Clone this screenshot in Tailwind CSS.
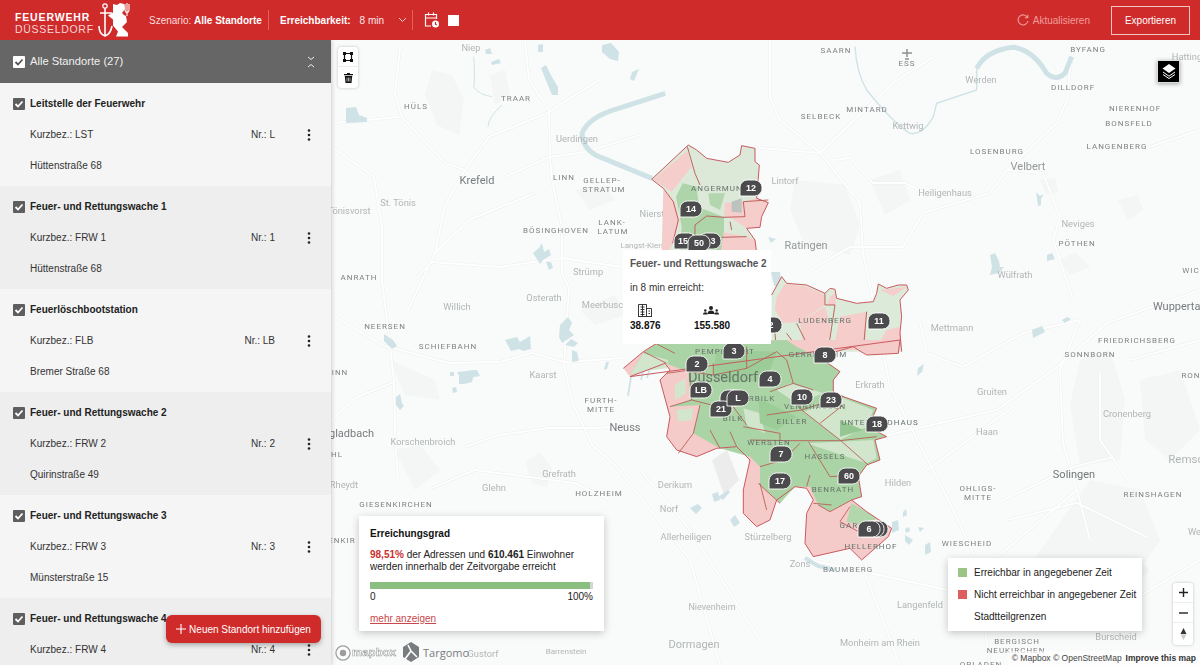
<!DOCTYPE html>
<html lang="de">
<head>
<meta charset="utf-8">
<title>Feuerwehr Düsseldorf</title>
<script src="https://cdn.jsdelivr.net/npm/@tailwindcss/browser@4"></script>
</head>
<body class="m-0 overflow-hidden">
<div class="w-[1200px] h-[665px] flex flex-col overflow-hidden [font-family:'Liberation_Sans',Arial,sans-serif] text-[10px] text-[#333]">
  <!-- header -->
  <header class="h-10 shrink-0 bg-[#d02b2b] flex items-center text-white relative z-20">
    <div class="w-[149px] h-10 shrink-0 flex items-center pl-[15px] relative">
      <div class="flex flex-col leading-none mt-[6px]">
        <span class="text-[10.5px] font-bold tracking-[0.85px] leading-[12px]">FEUERWEHR</span>
        <span class="text-[10.5px] tracking-[0.7px] leading-[12px] text-[#f6d5d5]">DÜSSELDORF</span>
      </div>
      <svg class="absolute left-[98px] top-0" width="36" height="40" viewBox="98 0 36 40" fill="#fff">
        <circle cx="105" cy="6" r="2.2" fill="none" stroke="#fff" stroke-width="1.2"/>
        <path d="M100 13h12M105 8v27M99 26c0 6 3 9 6 10c3-1 6-4 7-10" fill="none" stroke="#fff" stroke-width="1.6"/>
        <path d="M113 4l4 1 3-2 4 1 1 5-3 4 2 2 2 1 1 6-5 5 6 6v3.500h-12l2-5-5-6 0-6-5-4 5-3z"/>
        <path d="M127 3v13M125 4v6c0 2 2 3 2 3s2-1 2-3V4" fill="none" stroke="#fff" stroke-width="1.100"/>
      </svg>
    </div>
    <div class="flex items-center h-[20px] w-[120px] border-r border-[#e0605c] shrink-0 whitespace-nowrap text-[#f9dede]">Szenario:&nbsp;<b class="text-white">Alle Standorte</b></div>
    <div class="flex items-center pl-[11px] w-[144px] h-[20px] border-r border-[#e0605c] shrink-0 whitespace-nowrap">
      <b>Erreichbarkeit:</b><span class="ml-[9px] text-[#fbe7e7]">8 min</span>
      <svg class="ml-[14px]" width="9" height="6" viewBox="0 0 9 6" fill="none" stroke="#f7d0d0" stroke-width="1"><path d="M1 1l3.500 3.500L8 1"/></svg>
    </div>
    <svg class="ml-[11px]" width="16" height="18" viewBox="0 0 16 18" fill="none" stroke="#fff" stroke-width="1.200"><path d="M7 15H1.500V3.500h11V8M1.500 7h11M4.500 1.500v3M9.500 1.500v3"/><circle cx="11.500" cy="13" r="3.500" fill="#fff" stroke="none"/><path d="M11.500 11v2.200l1.300.8" stroke="#d02b2b"/></svg>
    <div class="ml-[8px] w-[11px] h-[11px] bg-white"></div>
    <div class="ml-auto flex items-center text-[#ee9d9b]">
      <svg width="12" height="12" viewBox="0 0 12 12" fill="none" stroke="#ee9d9b" stroke-width="1.100"><path d="M10.500 3.500A5 5 0 1 0 11 7M10.800 .8v3h-3"/></svg>
      <span class="ml-[4px]">Aktualisieren</span>
    </div>
    <div class="ml-[21px] mr-[10px] w-[79px] h-[29px] border border-[#f3c4c2] flex items-center justify-center text-[#fff]">Exportieren</div>
  </header>

  <div class="flex-1 flex min-h-0 relative">
    <!-- sidebar -->
    <aside class="w-[331px] shrink-0 flex flex-col relative z-10 shadow-[1px_0_4px_rgba(0,0,0,0.18)] overflow-hidden bg-[#f5f5f5]">
      <div class="h-[43px] shrink-0 bg-[#666666] flex items-center pl-[13px] text-[11.200px] text-[#f0f0f0]">
        <svg width="12" height="12" viewBox="0 0 12 12"><rect width="12" height="12" rx="1" fill="#fff"/><path d="M2.500 6l2.500 2.500L9.500 3.500" fill="none" stroke="#555" stroke-width="1.800"/></svg>
        <span class="ml-[5px]">Alle Standorte (27)</span>
        <svg class="ml-auto mr-[16px]" width="8" height="14" viewBox="0 0 8 14" fill="none" stroke="#eee" stroke-width="1"><path d="M1 2l3 2.500L7 2M1 12l3-2.500L7 12"/></svg>
      </div>

      <div class="h-[103px] shrink-0 bg-[#f5f5f5] pt-[5px] flex flex-col">
        <div class="h-[31px] flex items-center pl-[13px] font-bold text-[#222]"><svg width="12" height="12" viewBox="0 0 12 12"><rect width="12" height="12" rx="1" fill="#5e5e5e"/><path d="M2.500 6l2.500 2.500L9.500 3.500" fill="none" stroke="#fff" stroke-width="1.800"/></svg><span class="ml-[5px]">Leitstelle der Feuerwehr</span></div>
        <div class="h-[31px] flex items-center pl-[30px]"><span>Kurzbez.: LST</span><span class="ml-auto">Nr.: L</span><svg class="ml-[32px] mr-[20px]" width="4" height="12" viewBox="0 0 4 12" fill="#222"><circle cx="2" cy="1.500" r="1.300"/><circle cx="2" cy="6" r="1.300"/><circle cx="2" cy="10.500" r="1.300"/></svg></div>
        <div class="h-[31px] flex items-center pl-[30px]">Hüttenstraße 68</div>
      </div>
      <div class="h-[103px] shrink-0 bg-[#eeeeee] pt-[5px] flex flex-col">
        <div class="h-[31px] flex items-center pl-[13px] font-bold text-[#222]"><svg width="12" height="12" viewBox="0 0 12 12"><rect width="12" height="12" rx="1" fill="#5e5e5e"/><path d="M2.500 6l2.500 2.500L9.500 3.500" fill="none" stroke="#fff" stroke-width="1.800"/></svg><span class="ml-[5px]">Feuer- und Rettungswache 1</span></div>
        <div class="h-[31px] flex items-center pl-[30px]"><span>Kurzbez.: FRW 1</span><span class="ml-auto">Nr.: 1</span><svg class="ml-[32px] mr-[20px]" width="4" height="12" viewBox="0 0 4 12" fill="#222"><circle cx="2" cy="1.500" r="1.300"/><circle cx="2" cy="6" r="1.300"/><circle cx="2" cy="10.500" r="1.300"/></svg></div>
        <div class="h-[31px] flex items-center pl-[30px]">Hüttenstraße 68</div>
      </div>
      <div class="h-[103px] shrink-0 bg-[#f5f5f5] pt-[5px] flex flex-col">
        <div class="h-[31px] flex items-center pl-[13px] font-bold text-[#222]"><svg width="12" height="12" viewBox="0 0 12 12"><rect width="12" height="12" rx="1" fill="#5e5e5e"/><path d="M2.500 6l2.500 2.500L9.500 3.500" fill="none" stroke="#fff" stroke-width="1.800"/></svg><span class="ml-[5px]">Feuerlöschbootstation</span></div>
        <div class="h-[31px] flex items-center pl-[30px]"><span>Kurzbez.: FLB</span><span class="ml-auto">Nr.: LB</span><svg class="ml-[32px] mr-[20px]" width="4" height="12" viewBox="0 0 4 12" fill="#222"><circle cx="2" cy="1.500" r="1.300"/><circle cx="2" cy="6" r="1.300"/><circle cx="2" cy="10.500" r="1.300"/></svg></div>
        <div class="h-[31px] flex items-center pl-[30px]">Bremer Straße 68</div>
      </div>
      <div class="h-[103px] shrink-0 bg-[#eeeeee] pt-[5px] flex flex-col">
        <div class="h-[31px] flex items-center pl-[13px] font-bold text-[#222]"><svg width="12" height="12" viewBox="0 0 12 12"><rect width="12" height="12" rx="1" fill="#5e5e5e"/><path d="M2.500 6l2.500 2.500L9.500 3.500" fill="none" stroke="#fff" stroke-width="1.800"/></svg><span class="ml-[5px]">Feuer- und Rettungswache 2</span></div>
        <div class="h-[31px] flex items-center pl-[30px]"><span>Kurzbez.: FRW 2</span><span class="ml-auto">Nr.: 2</span><svg class="ml-[32px] mr-[20px]" width="4" height="12" viewBox="0 0 4 12" fill="#222"><circle cx="2" cy="1.500" r="1.300"/><circle cx="2" cy="6" r="1.300"/><circle cx="2" cy="10.500" r="1.300"/></svg></div>
        <div class="h-[31px] flex items-center pl-[30px]">Quirinstraße 49</div>
      </div>
      <div class="h-[103px] shrink-0 bg-[#f5f5f5] pt-[5px] flex flex-col">
        <div class="h-[31px] flex items-center pl-[13px] font-bold text-[#222]"><svg width="12" height="12" viewBox="0 0 12 12"><rect width="12" height="12" rx="1" fill="#5e5e5e"/><path d="M2.500 6l2.500 2.500L9.500 3.500" fill="none" stroke="#fff" stroke-width="1.800"/></svg><span class="ml-[5px]">Feuer- und Rettungswache 3</span></div>
        <div class="h-[31px] flex items-center pl-[30px]"><span>Kurzbez.: FRW 3</span><span class="ml-auto">Nr.: 3</span><svg class="ml-[32px] mr-[20px]" width="4" height="12" viewBox="0 0 4 12" fill="#222"><circle cx="2" cy="1.500" r="1.300"/><circle cx="2" cy="6" r="1.300"/><circle cx="2" cy="10.500" r="1.300"/></svg></div>
        <div class="h-[31px] flex items-center pl-[30px]">Münsterstraße 15</div>
      </div>
      <div class="h-[103px] shrink-0 bg-[#eeeeee] pt-[5px] flex flex-col">
        <div class="h-[31px] flex items-center pl-[13px] font-bold text-[#222]"><svg width="12" height="12" viewBox="0 0 12 12"><rect width="12" height="12" rx="1" fill="#5e5e5e"/><path d="M2.500 6l2.500 2.500L9.500 3.500" fill="none" stroke="#fff" stroke-width="1.800"/></svg><span class="ml-[5px]">Feuer- und Rettungswache 4</span></div>
        <div class="h-[31px] flex items-center pl-[30px]"><span>Kurzbez.: FRW 4</span><span class="ml-auto">Nr.: 4</span><svg class="ml-[32px] mr-[20px]" width="4" height="12" viewBox="0 0 4 12" fill="#222"><circle cx="2" cy="1.500" r="1.300"/><circle cx="2" cy="6" r="1.300"/><circle cx="2" cy="10.500" r="1.300"/></svg></div>
      </div>

      <button class="absolute left-[166px] top-[575px] w-[155px] h-[28px] rounded-[6px] bg-[#d02b2b] text-white text-[10px] flex items-center justify-center whitespace-nowrap shadow-[0_2px_5px_rgba(0,0,0,0.3)]">
        <svg width="10" height="10" viewBox="0 0 10 10" stroke="#fff" stroke-width="1.100"><path d="M5 0v10M0 5h10"/></svg>
        <span class="ml-[3px]">Neuen Standort hinzufügen</span>
      </button>
    </aside>

    <!-- map -->
    <main class="flex-1 relative bg-[#f9fafa] overflow-hidden">
      <svg class="absolute inset-0 blur-[0.3px]" width="869" height="625" viewBox="331 40 869 625">
        <defs>
          <g id="roads" fill="none">
            <path d="M525 40L529 80L549 110L550 157L552 180L562 227L562 273L569 288L564 365L572 402L592 445L615 465L690 560L720 665"/>
            <path d="M400 48L395 95L402 117L445 163L465 170L489 137L549 112L572 97L599 80"/>
            <path d="M505 177L549 157L585 152L640 135"/>
            <path d="M435 253L469 220L535 193"/>
            <path d="M415 280L432 262L499 267L562 258L622 267"/>
            <path d="M335 123L399 117"/>
            <path d="M332 147L374 177L382 227L382 280L390 345L394 382L395 432L398 480"/>
            <path d="M332 315L382 345L449 363L499 362L532 353L565 362L622 358"/>
            <path d="M465 447L499 435L549 428L595 428L640 425"/>
            <path d="M432 488L475 470L575 483L610 500"/>
            <path d="M332 420L355 398L394 382"/>
            <path d="M465 170L445 205L435 253L408 310"/>
            <path d="M770 40L770 97L780 120L820 153L860 203L863 253L873 300L890 387L950 503L975 557L990 665"/>
            <path d="M760 148L820 153L893 83L933 57"/>
            <path d="M835 160L850 158L873 183L905 183L925 193"/>
            <path d="M903 247L923 213L990 193L1007 170L1057 123L1067 100L1070 70L1075 40"/>
            <path d="M1007 170L1043 173L1060 217L1053 240L1073 300"/>
            <path d="M810 270L850 247L903 247"/>
            <path d="M880 437L997 410L1057 367L1107 323L1200 290"/>
            <path d="M923 473L1013 407"/>
            <path d="M997 503L1073 467L1113 457"/>
            <path d="M1100 373L1100 440L1130 483"/>
            <path d="M920 323L927 353L963 367L1023 333L1080 320"/>
            <path d="M1080 320L1060 370L1063 443L1077 490L1090 540"/>
            <path d="M997 557L1077 490"/>
            <path d="M1007 520L1077 503L1147 537"/>
            <path d="M640 470L690 530L760 640"/>
            <path d="M850 470L860 560L900 665"/>
            <path d="M810 560L948 590"/>
            <path d="M1130 360L1200 340"/>
            <path d="M1140 150L1200 130"/>
            <path d="M1100 620L1200 560"/>
          </g>
        </defs>
        <!-- urban tints -->
        <g fill="#f4f5f5">
          <path d="M432 70l20 5 12 25-5 35-22-10-12-30z"/>
          <path d="M490 75l15-5 5 25-15 10z"/>
          <path d="M575 190l30-5 10 15-25 10z"/>
          <path d="M795 180l50 5 15 40-10 30-45-10-15-35z"/>
          <path d="M870 180l30-10 10 30-25 15z"/>
          <path d="M1060 260l15-8 15 15-20 8z"/>
          <path d="M1080 360l30-10 15 50-5 60-40 5-10-60z"/>
          <path d="M1090 480l50 10 20 50-40 60-60 5-30-40z"/>
          <path d="M1140 380l40-10 20 60-30 30-25-20z"/>
          <path d="M1040 560l60-30 50 40-30 30-70 5z"/>
          <path d="M390 360l45 20 5 20-35-5z"/>
          <path d="M395 450l25-5 20 25-25 20z"/>
          <path d="M525 462l15-10 12 15-5 20-15-3z"/>
          <path d="M580 310l35-15 10 20-30 10z"/>
          <path d="M1118 200l20-5 5 15-15 10z"/>
          <path d="M1040 180l15-2 3 14-12 3z"/>
          <path d="M712 460l15-10 12 30-15 15z" fill="#ececec"/>
        </g>
        <use href="#roads" stroke="#eef0f0" stroke-width="3"/>
        <use href="#roads" stroke="#ffffff" stroke-width="1.800"/>
        <!-- water -->
        <g transform="translate(332 40) scale(.3333)" fill="none" stroke="#cfe3e7">
          <path d="M1000 160L860 205Q770 230 750 280Q750 320 790 345L960 415" stroke-width="15"/>
          <path d="M425 50Q430 120 425 140Q440 165 480 170" stroke-width="3"/>
          <path d="M510 195Q470 230 468 260" stroke-width="3"/>
        </g>
        <g transform="translate(760 40) scale(.3333)" fill="none" stroke="#cfe3e7">
          <path d="M650 85Q680 30 760 22Q820 30 860 100Q890 125 915 100L935 50" stroke-width="15"/>
          <path d="M650 85V150L530 190L520 230Q490 285 450 280Q400 250 320 150Q290 100 285 20" stroke-width="4"/>
        </g>
        <path d="M805 558L818 566L835 570" fill="none" stroke="#cfe3e7" stroke-width="4"/>
        <g fill="#cfe3e7">
          <path d="M346 108l10-1 3 8 8 3 0 4-21 1z"/>
          <path d="M541 68l5-3 6 12 6 10 0 8-6 0-5-12z"/>
          <path d="M602 45l9-2 8 9-1 9-8-2-8-7z"/>
          <path d="M632 72l7-3-5 12-4-2z"/>
          <path d="M485 50l5-2 2 6-6 0zM491 62l8-3 2 4-9 2zM538 45l5-1 0 8-5 0z"/>
          <path d="M533 253l6-5 3-5 2 9 5-3 2 6-8 5-3 4zM546 262l5 0 2 6-4 2z"/>
          <path d="M384 334l9 6 4 6-5 3-8-8z"/>
          <path d="M505 340l12-3 3 5 10-6 1 13-8 2-4-2-8 2zM560 325l8-8 4 6-3 7 5 5-6 4-6 4-3-6z"/>
          <path d="M457 372l20-2 3 6-19 3zM450 372l4 0 0 4-4 0z"/>
          <path d="M459 376l8-5 8-1-3 12-8 2-5 0z"/>
          <path d="M396 397l4-3 2 9 2 3-4 4-4-5zM452 388l4-1 1 5-4 1z"/>
          <path d="M565 345l6-6 7 4-4 4zM572 350l5 2 2 9-7 1z"/>
          <path d="M606 362l3 0-2 7-3 1z"/>
          <path d="M740 208l3 3-1 4-3-2zM768 237l8 2-5 4z"/>
          <path d="M771 272l9 0 2 14-8 0z"/>
          <path d="M990 255l5-2 4 8 1 6 4 0-5 6-9 2 2-8z"/>
          <path d="M1036 192l4 4 4-2-3 5 0 6-3 1-1-8zM1047 255l5-2 3 6-8 2z"/>
          <path d="M1032 330l10-4 3 6-12 6zM1062 320l5-3 4 2-6 4z"/>
          <path d="M918 368l6-4-2 8-5 4z"/>
          <path d="M892 522l6-2 1 10-7 3zM903 512l3-3 1 6-4 2zM905 529l4-2 1 4-4 2zM918 527l6 1-4 4zM905 535l8 5-4 5-4-4zM925 545l5-3 1 10-6 3z"/>
          <path d="M690 508l8-4 4 4-6 6zM712 494l6-2 2 8-6 2zM718 497l10-7 2 2-7 8z"/>
          <path d="M730 520l5-5 5 8-6 4z"/>
          <path d="M640 357l-8 14-4 25M647 355l-6 25M653 358l-6 20" fill="none" stroke="#cfe3e7" stroke-width="1.800"/>
        </g>
        <!-- labels -->
        <g font-family="Roboto, 'Liberation Sans', sans-serif" font-size="9.300" fill="#b2b6b6" text-anchor="middle">
          <text x="471" y="51">Niep</text><text x="577" y="142">Uerdingen</text><text x="398" y="206">St. Tönis</text><text x="349" y="214">Tönisvorst</text><text x="652" y="217">Nierst</text><text x="644" y="248" font-size="8">Langst-Kierst</text><text x="588" y="275">Strümp</text><text x="544" y="301">Osterath</text><text x="457" y="310">Willich</text><text x="605" y="308">Meerbusch</text><text x="543" y="378">Kaarst</text><text x="423" y="445">Korschenbroich</text><text x="344" y="488">Rheydt</text><text x="559" y="477">Grefrath</text><text x="494" y="491">Glehn</text><text x="675" y="488">Derikum</text><text x="669" y="512">Norf</text><text x="686" y="540">Allerheiligen</text><text x="768" y="540">Stürzelberg</text><text x="800" y="567">Zons</text><text x="870" y="388">Erkrath</text><text x="898" y="486">Hilden</text><text x="981" y="83">Werden</text><text x="1187" y="60">Hatting</text><text x="908" y="129">Kettwig</text><text x="785" y="184">Lintorf</text><text x="945" y="196">Heiligenhaus</text><text x="1078" y="227">Neviges</text><text x="1015" y="278">Wülfrath</text><text x="952" y="331">Mettmann</text><text x="992" y="395">Gruiten</text><text x="1127" y="417">Cronenberg</text><text x="987" y="435">Haan</text><text x="1116" y="640">Burscheid</text><text x="566" y="654" font-size="8">Barrenstein</text><text x="483" y="657">Gustorf</text><text x="712" y="610" font-size="9">Nievenheim</text><text x="694" y="648" font-size="11">Dormagen</text><text x="880" y="646">Monheim am Rhein</text><text x="1196" y="535">Wer</text>
          <text x="920" y="608">Langenfeld</text>
          <text x="1189" y="463" font-size="11.500">Remsch</text>
        </g>
        <g font-family="Roboto, 'Liberation Sans', sans-serif" font-size="8" letter-spacing="1" fill="#808283" text-anchor="middle">
          <text x="416" y="109">HÜLS</text><text x="516" y="101">TRAAR</text><text x="564" y="180">LINN</text><text x="602" y="183">GELLEP-</text><text x="604" y="192">STRATUM</text><text x="556" y="233">BÖSINGHOVEN</text><text x="612" y="225">LANK-</text><text x="613" y="234">LATUM</text><text x="359" y="280">ANRATH</text><text x="385" y="329">NEERSEN</text><text x="448" y="349">SCHIEFBAHN</text><text x="340" y="375">INN</text><text x="601" y="403">FURTH-</text><text x="601" y="412">MITTE</text><text x="337" y="457">HL</text><text x="599" y="496">HOLZHEIM</text><text x="396" y="507">GIESENKIRCHEN</text><text x="836" y="53">SAARN</text><text x="907" y="66">ESS</text><text x="1088" y="52">BYFANG</text><text x="1073" y="90">DILLDORF</text><text x="821" y="119">SELBECK</text><text x="867" y="112">MINTARD</text><text x="1135" y="111">NIERENHOF</text><text x="1129" y="126">BONSFELD</text><text x="997" y="154">LOSENBURG</text><text x="1117" y="149">LANGENBERG</text><text x="1077" y="246">PÖTHEN</text><text x="1191" y="273">WIC</text><text x="1137" y="343">FRIEDRICHSBERG</text><text x="1090" y="357">SONNBORN</text><text x="1191" y="378">RON</text><text x="978" y="491">OHLIGS-</text><text x="978" y="500">MITTE</text><text x="1153" y="497">REINSHAGEN</text><text x="967" y="546">WIESCHEID</text><text x="1017" y="644">BERGISCH</text><text x="1016" y="653">NEUKIRCHEN</text><text x="981" y="667">OPLADEN</text><text x="848" y="572">BAUMBERG</text><text x="342" y="543">ENKIR</text>
        </g>
        <g font-family="Roboto, 'Liberation Sans', sans-serif" fill="#95999a" text-anchor="middle" font-size="11">
          <text x="477" y="184" fill="#787c7e">Krefeld</text><text x="806" y="249">Ratingen</text><text x="1028" y="170">Velbert</text><text x="625" y="431" fill="#747879">Neuss</text><text x="374" y="437" text-anchor="end" fill="#787c7e">Mönchengladbach</text><text x="1074" y="478" fill="#747879">Solingen</text><text x="1178" y="310" fill="#787c7e">Wuppertal</text>
        </g>
        <path d="M907 49v8M902 53h10M905 59h4" fill="none" stroke="#8d9192" stroke-width="1.500"/>

        <!-- north catchment -->
        <g transform="translate(600 130) scale(.3333)">
          <path d="M155 148L265 45L290 60L320 85L385 97L420 75L425 47L465 55L465 95L478 105L470 205L505 218L485 260L480 292L440 295L465 330L470 370L210 370L215 320L235 270L220 215L190 175Z" fill="#dce9d9"/>
          <path d="M160 148L262 62L275 110L215 185Z M190 178L222 215L238 270L218 340L205 370L185 370Z M375 218L430 215L470 205L505 218L485 260L480 292L440 295L395 265L372 262Z M362 305L440 320L465 330L470 370L365 370Z" fill="#f5cdcb"/>
          <path d="M248 160L290 170L297 232L372 262L372 300L362 370L238 370L245 290L228 200Z" fill="#aed5a9"/>
          <path d="M325 190L375 190L360 240L330 225Z" fill="#b3d6ae"/>
          <path d="M395 215L425 205L425 248L395 245Z" fill="#bcc2bd"/>
          <path d="M155 148L265 45L290 60L320 85L385 97L420 75L425 47L465 55L465 95L478 105L470 205L505 218L485 260L480 292L440 295L465 330L470 370M218 340L235 270L220 215L190 175L155 148" fill="none" stroke="#c9595e" stroke-width="3"/>
          <path d="M262 50L285 130L300 165M372 262L435 260L430 215L505 210M285 285L320 258L372 262M285 285L285 325M365 322L440 320M390 275L395 300" fill="none" stroke="#b85b55" stroke-width="2.800"/>
        </g>
        <!-- east catchment -->
        <g transform="translate(600 130) scale(.3333)">
          <path d="M515 495L545 440L560 460L620 465L675 490L690 475L705 478L710 505L770 520L820 515L830 490L835 462L860 475L895 465L920 465L925 480L900 510L905 560L900 610L905 665L515 665Z" fill="#dcebd9"/>
          <path d="M530 500L555 462L620 470L675 495L675 525L600 575L550 580L525 540Z M690 500L705 490L708 525L680 525Z M720 560L800 545L795 660L700 660Z M860 600L900 590L905 650L830 650Z M840 480L860 478L920 470L880 498Z M600 575L675 530L690 580L690 625L610 650Z" fill="#f5cdcb"/>
          <path d="M515 495L545 440L560 460L620 465L675 490L690 475L705 478L710 505L770 520L820 515L830 490L835 462L860 475L895 465L920 465L925 480L900 510L905 560L900 610L905 665" fill="none" stroke="#c9595e" stroke-width="3"/>
          <path d="M675 490L675 525L705 525L690 625L680 665M800 545L790 660M525 610L530 665M560 610L600 665M620 640L590 580" fill="none" stroke="#b85b55" stroke-width="2.800"/>
        </g>
        <!-- south catchment -->
        <g transform="translate(610 340) scale(.3333)">
          <path d="M40 85L100 35L140 10L480 0L870 0L865 40L770 45L745 30L730 20L660 40L640 60L690 95L670 120L670 155L700 170L800 205L775 260L830 290L795 300L810 360L770 375L745 410L755 470L725 480L770 515L845 565L835 590L755 660L720 625L610 650L585 610L590 520L610 480L590 445L555 440L500 480L480 540L440 560L400 520L400 450L420 360L380 320L320 325L260 350L200 330L170 290L180 230L150 120L180 90L165 70L60 110Z" fill="#f5cbca"/>
          <path d="M60 105L100 38L140 10L530 0L560 20L640 60L690 95L670 120L670 155L700 170L800 205L775 260L830 290L795 300L810 360L770 375L745 410L755 470L725 480L660 515L625 495L600 440L555 440L510 490L450 435L450 380L420 350L330 325L250 280L270 195L180 200L240 180L235 95L165 70Z" fill="#aad4a5"/>
          <path d="M60 105L100 40L175 60L170 85L90 95Z M195 135L225 115L228 160L195 180Z M200 210L250 205L245 240L205 245Z M580 215L700 175L790 210L770 260L690 300Z M590 310L690 305L790 300L800 355L770 370Z M500 150L540 130L610 150L640 160L560 190Z M400 205L450 220L465 280L410 255Z" fill="#d2e6cd"/>
          <path d="M690 240L760 270L690 290Z" fill="#96c792"/>
          <path d="M320 30L500 35L470 120L360 130L310 105Z M445 175L560 230L500 270L450 250Z" fill="#9ccc97"/>
          <path d="M620 500L660 515L690 545L730 500L770 515L845 565L790 620L700 560Z" fill="#f5cbca"/>
          <path d="M725 490L770 515L800 535L770 560L710 545Z" fill="#b2d7ad"/>
          <path d="M40 85L100 35L140 10M870 0L865 40L770 45L745 30L730 20L660 40L640 60L690 95L670 120L670 155L700 170L800 205L775 260L830 290L795 300L810 360L770 375L745 410L755 470L725 480L770 515L845 565L835 590L755 660L720 625L610 650L585 610L590 520L610 480L590 445L555 440L500 480L480 540L440 560L400 520L400 450L420 360L380 320L320 325L260 350L200 330L170 290L180 230L150 120L180 90L165 70L60 110Z" fill="none" stroke="#c9595e" stroke-width="3"/>
          <path d="M170 100L240 90L245 180L180 200M245 180L305 195M270 195L250 280L205 340M310 70L310 105L240 95M310 105L410 85L500 35M410 20L410 85M500 35L530 60L550 130L610 150M550 130L480 155M550 160L575 210L690 300L775 375M470 225L575 210M575 210L700 170M630 250L700 195M400 260L510 280L510 300M420 300L540 302L690 302L800 290M595 305L660 410M570 310L520 360L450 380M600 405L590 440M660 410L750 405M450 430L470 510M445 430L510 490M725 480L660 515L625 495M720 500L690 545L755 580M340 160L410 255M360 275L380 320M300 270L330 325M100 35L170 70M140 12L195 40M610 490L665 495" fill="none" stroke="#b85b55" stroke-width="2.600"/>
        </g>
        <!-- district labels -->
        <g font-family="Roboto, 'Liberation Sans', sans-serif" font-size="8" letter-spacing="1" fill="#66726a" text-anchor="middle">
          <text x="720" y="191">ANGERMUND</text><text x="825" y="323">LUDENBERG</text><text x="725" y="354">PEMPELFORT</text><text x="818" y="357">GERRESHEIM</text><text x="753" y="401">OBERBILK</text><text x="733" y="421">BILK</text><text x="792" y="424">EILLER</text><text x="815" y="409">VENNHAUSEN</text><text x="880" y="425">UNTERFELDHAUS</text><text x="769" y="445">WERSTEN</text><text x="825" y="459">HASSELS</text><text x="833" y="492">BENRATH</text><text x="858" y="528">GARATH</text><text x="871" y="549">HELLERHOF</text>
        </g>
        <text x="723" y="382" font-family="Roboto, 'Liberation Sans', sans-serif" font-size="14.500" fill="#68746c" text-anchor="middle">Düsseldorf</text>
        <!-- markers -->
        <defs>
          <path id="pin" d="M-11 8V-1A7.500 7.500 0 0 1 -3.500 -8H3.500A7.500 7.500 0 0 1 11 -.5A7.500 7.500 0 0 1 3.500 8Z" fill="#4b4b4d" stroke="#fff" stroke-width=".9"/>
        </defs>
        <g font-family="'Liberation Sans', sans-serif" font-size="9" font-weight="700" fill="#fff" text-anchor="middle">
          <g transform="translate(751 188)"><use href="#pin"/><text y="3.300">12</text></g>
          <g transform="translate(691 209)"><use href="#pin"/><text y="3.300">14</text></g>
          <g transform="translate(710 241)"><use href="#pin"/><text y="3.300" x="3">3</text></g>
          <g transform="translate(685 241)"><use href="#pin"/><text y="3.300" x="-2">15</text></g>
          <g transform="translate(699 243)"><use href="#pin"/><text y="3.300">50</text></g>
          <g transform="translate(771 325)"><use href="#pin"/><text y="3.300">2</text></g>
          <g transform="translate(879 321)"><use href="#pin"/><text y="3.300">11</text></g>
          <g transform="translate(734 351)"><use href="#pin"/><text y="3.300">3</text></g>
          <g transform="translate(697 364)"><use href="#pin"/><text y="3.300">2</text></g>
          <g transform="translate(825 355)"><use href="#pin"/><text y="3.300">8</text></g>
          <g transform="translate(770 379)"><use href="#pin"/><text y="3.300">4</text></g>
          <g transform="translate(701 390)"><use href="#pin"/><text y="3.300">LB</text></g>
          <g transform="translate(731 398)"><use href="#pin"/></g>
          <g transform="translate(721 409)"><use href="#pin"/><text y="3.300">21</text></g>
          <g transform="translate(738 398)"><use href="#pin"/><text y="3.300">L</text></g>
          <g transform="translate(802 397)"><use href="#pin"/><text y="3.300">10</text></g>
          <g transform="translate(831 400)"><use href="#pin"/><text y="3.300">23</text></g>
          <g transform="translate(877 424)"><use href="#pin"/><text y="3.300">18</text></g>
          <g transform="translate(781 454)"><use href="#pin"/><text y="3.300">7</text></g>
          <g transform="translate(849 476)"><use href="#pin"/><text y="3.300">60</text></g>
          <g transform="translate(780 481)"><use href="#pin"/><text y="3.300">17</text></g>
          <g transform="translate(877 529)"><use href="#pin"/></g>
          <g transform="translate(873 529)"><use href="#pin"/></g>
          <g transform="translate(869 529)"><use href="#pin"/><text y="3.300">6</text></g>
        </g>
      </svg>

      <!-- draw control -->
      <div class="absolute left-[7px] top-[7px] w-5 bg-white rounded-[3px] shadow-[0_0_3px_rgba(0,0,0,0.25)] flex flex-col">
        <div class="h-[20px] flex items-center justify-center border-b border-[#eee]">
          <svg width="10" height="10" viewBox="0 0 10 10" fill="none" stroke="#111" stroke-width="1.200"><path d="M2 1.500h6M2 8.500h6M1.500 2v6M8.500 2v6"/><path d="M0 0h3v3H0zM7 0h3v3H7zM0 7h3v3H0zM7 7h3v3H7z" fill="#111" stroke="none"/></svg>
        </div>
        <div class="h-[21px] flex items-center justify-center">
          <svg width="9" height="10" viewBox="0 0 9 10" fill="#111"><path d="M3 0h3v1h3v1.200H0V1h3zM.8 3h7.400L7.500 10h-6z"/><path d="M3 4.500v4M4.500 4.500v4M6 4.500v4" stroke="#fff" stroke-width=".6"/></svg>
        </div>
      </div>

      <!-- layers -->
      <div class="absolute left-[826px] top-[20px] w-[23px] h-[23px] bg-black flex items-center justify-center shadow-[0_1px_4px_rgba(0,0,0,0.35)] border border-[#ddd]">
        <svg width="14" height="15" viewBox="0 0 14 15" fill="#fff"><path d="M7 0l6.500 4.500L7 9 .5 4.500z"/><path d="M1 8l6 4.200L13 8M1 10.500l6 4 6-4" fill="none" stroke="#fff" stroke-width="1"/></svg>
      </div>

      <!-- popup -->
      <div class="absolute left-[292px] top-[210px] w-[148px] h-[94px] bg-white px-[7px] pt-[7px]">
        <div class="font-bold text-[#555] leading-[13px] whitespace-nowrap">Feuer- und Rettungswache 2</div>
        <div class="mt-[11px] leading-[13px] text-[#333]">in 8 min erreicht:</div>
        <div class="mt-[10px] flex">
          <div class="w-[64px] flex flex-col items-start">
            <svg class="ml-[8px]" width="14" height="13" viewBox="0 0 14 13" fill="none" stroke="#222" stroke-width=".9"><path d="M.5 12.500V.5h8v12M8.500 4.500h5v8M0 12.500h14M2.500 3h4M2.500 5.500h4M2.500 8h4M2.500 10.500h4M4.500 1v11M10.500 7h1.500M10.500 9.500h1.500"/></svg>
            <b class="text-[#111] mt-[2px] leading-[13px]">38.876</b>
          </div>
          <div class="flex flex-col items-start">
            <svg class="ml-[9px]" width="16" height="13" viewBox="0 0 16 13" fill="#222"><circle cx="8" cy="4" r="2"/><path d="M4.500 10c0-2.500 1.500-3.500 3.500-3.500s3.500 1 3.500 3.500z"/><circle cx="2.300" cy="6.500" r="1.200"/><path d="M0 10.500c0-1.500 1-2.200 2.300-2.200s2.300.7 2.300 2.200z"/><circle cx="13.700" cy="6.500" r="1.200"/><path d="M11.400 10.500c0-1.500 1-2.200 2.300-2.200s2.300.7 2.300 2.200z"/></svg>
            <b class="text-[#111] mt-[2px] leading-[13px]">155.580</b>
          </div>
        </div>
      </div>

      <!-- Erreichungsgrad -->
      <div class="absolute left-[28px] top-[476px] w-[245px] h-[115px] bg-white shadow-[0_2px_8px_rgba(0,0,0,0.22)] px-[11px] pt-[11px] text-[#222]">
        <div class="font-bold leading-[13px] text-[#111]">Erreichungsgrad</div>
        <div class="mt-[9px] leading-[12px]"><b class="text-[#c9302f]">98,51%</b> der Adressen und <b>610.461</b> Einwohner<br>werden innerhalb der Zeitvorgabe erreicht</div>
        <div class="mt-[9px] h-[7px] bg-[#d5d5d5]"><div class="h-[7px] w-[98.510%] bg-[#8bbf80]"></div></div>
        <div class="flex justify-between leading-[13px] mt-[1px]"><span>0</span><span>100%</span></div>
        <div class="mt-[9px] leading-[13px] text-[#c9474a] underline">mehr anzeigen</div>
      </div>

      <!-- legend -->
      <div class="absolute left-[617px] top-[518px] w-[194px] h-[73px] bg-white shadow-[0_2px_8px_rgba(0,0,0,0.22)] pl-[10px] pt-[3px] flex flex-col text-[#222]">
        <div class="h-[22px] flex items-center"><span class="w-[9px] h-[9px] bg-[#9bc586]"></span><span class="ml-[7px] whitespace-nowrap">Erreichbar in angegebener Zeit</span></div>
        <div class="h-[22px] flex items-center"><span class="w-[9px] h-[9px] bg-[#dd5f5f]"></span><span class="ml-[7px] whitespace-nowrap">Nicht erreichbar in angegebener Zeit</span></div>
        <div class="h-[23px] flex items-center"><span class="ml-[16px] whitespace-nowrap">Stadtteilgrenzen</span></div>
      </div>

      <!-- zoom -->
      <div class="absolute left-[842px] top-[543px] w-[20px] h-[62px] bg-white rounded-[3px] shadow-[0_0_3px_rgba(0,0,0,0.25)] flex flex-col items-center text-[#222]">
        <div class="h-[20px] w-full flex items-center justify-center border-b border-[#eee]"><svg width="9" height="9" viewBox="0 0 9 9" stroke="#222" stroke-width="1.400"><path d="M4.500 0v9M0 4.500h9"/></svg></div>
        <div class="h-[20px] w-full flex items-center justify-center border-b border-[#eee]"><svg width="9" height="2" viewBox="0 0 9 2" stroke="#222" stroke-width="1.400"><path d="M0 1h9"/></svg></div>
        <div class="h-[22px] flex items-center justify-center"><svg width="7" height="12" viewBox="0 0 7 12"><path d="M3.500 0L6.500 6H.5z" fill="#333"/><path d="M.5 6.500h6L3.500 12z" fill="#ccc"/></svg></div>
      </div>

      <!-- logos -->
      <div class="absolute left-[4px] bottom-[4px] flex items-center gap-[7px] opacity-70">
        <div class="flex items-center">
          <svg width="16" height="16" viewBox="0 0 17 17"><circle cx="8.500" cy="8.500" r="7.500" fill="#fff" stroke="#777" stroke-width="1.300"/><circle cx="8.500" cy="8.500" r="3.400" fill="#777"/></svg>
          <span class="ml-[1px] text-[11.500px] font-bold text-[#fff] [-webkit-text-stroke:0.6px_#777] leading-none">mapbox</span>
        </div>
      </div>
      <div class="absolute left-[71px] bottom-[3px] flex items-center">
        <svg width="18" height="20" viewBox="0 0 18 20"><path d="M9 0L17 5V15L9 20L1 15V5Z" fill="#7a7d80" /><path d="M3 17L9 9L15 15M9 9L6 3" fill="none" stroke="#fff" stroke-width="1.600"/></svg>
        <span class="ml-[3px] text-[11px] text-[#7a7d80] [font-family:'Open_Sans',sans-serif] leading-none">Targomo</span>
      </div>
      <!-- attribution -->
      <div class="absolute right-0 bottom-0 h-[14px] pl-[4px] pr-[4px] bg-white/60 flex items-center text-[8.500px] text-[#444] whitespace-nowrap">
        <span>© Mapbox © OpenStreetMap</span><b class="ml-[4px] text-[#333]">Improve this map</b>
      </div>
    </main>
  </div>
</div>
</body>
</html>
